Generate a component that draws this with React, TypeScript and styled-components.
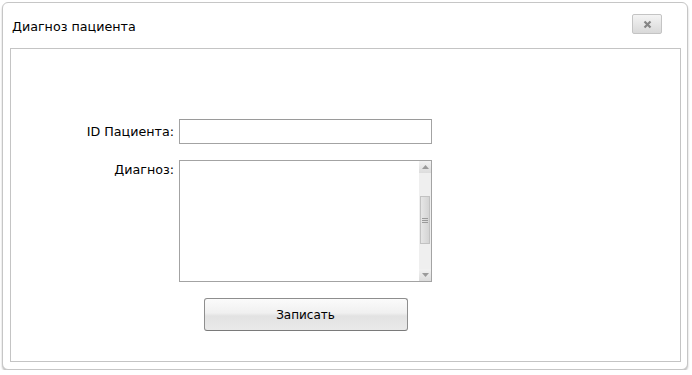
import React from "react";
import styled, { createGlobalStyle } from "styled-components";

const GlobalStyle = createGlobalStyle`
  html, body {
    margin: 0;
    padding: 0;
    background: #ffffff;
  }
  body {
    font-family: "DejaVu Sans", "Liberation Sans", sans-serif;
    font-size: 12.7px;
    color: #000;
  }
`;

const Window = styled.div`
  margin: 2px 0 0 2px;
  width: 686px;
  height: 368px;
  box-sizing: border-box;
  border: 1px solid #c6c6c6;
  border-radius: 6px;
  background: #ffffff;
  box-shadow: 0 2px 2px rgba(0, 0, 0, 0.25);
  display: flex;
  flex-direction: column;
`;

const TitleBar = styled.div`
  height: 45px;
  display: flex;
  align-items: flex-start;
  justify-content: space-between;
  padding: 0 25px 0 9px;
`;

const Title = styled.div`
  margin-top: 16px;
  font-size: 12.7px;
  line-height: 16px;
  color: #000;
`;

const CloseButton = styled.button`
  margin-top: 11px;
  width: 30px;
  height: 20px;
  padding: 0;
  box-sizing: border-box;
  border: 1px solid #c4c4c4;
  border-radius: 2px;
  background: linear-gradient(#f4f4f4, #d9d9d9);
  display: flex;
  align-items: center;
  justify-content: center;
  cursor: pointer;
`;

const Panel = styled.div`
  margin: 0 6px 7px 7px;
  flex: 1;
  border: 1px solid #c4c4c4;
  padding-top: 70px;
`;

const Form = styled.div`
  display: grid;
  grid-template-columns: 163px 253px;
  column-gap: 5px;
  row-gap: 16px;
`;

const Label = styled.label<{ $top?: boolean }>`
  justify-self: end;
  align-self: ${(p) => (p.$top ? "start" : "center")};
  margin-top: ${(p) => (p.$top ? "2px" : "0")};
  font-size: 12.7px;
  line-height: 16px;
  color: #000;
`;

const TextInput = styled.input`
  height: 25px;
  box-sizing: border-box;
  border: 1px solid #a3a3a3;
  border-top-color: #9a9a9a;
  background: #fff;
  padding: 0 4px;
  font-family: inherit;
  font-size: 13px;
  outline: none;
`;

const AreaBox = styled.div`
  height: 122px;
  box-sizing: border-box;
  border: 1px solid #a3a3a3;
  display: flex;
  background: #fff;
`;

const AreaText = styled.textarea`
  flex: 1;
  border: none;
  resize: none;
  outline: none;
  padding: 2px 4px;
  font-family: inherit;
  font-size: 13px;
  overflow: hidden;
`;

const ScrollBar = styled.div`
  width: 12px;
  background: #efefef;
  display: flex;
  flex-direction: column;
  align-items: center;
`;

const ScrollArrow = styled.div`
  width: 12px;
  height: 12px;
  display: flex;
  align-items: center;
  justify-content: center;
  background: linear-gradient(#f2f2f2, #dcdcdc);
`;

const ScrollTrack = styled.div`
  flex: 1;
  width: 100%;
  padding-top: 23px;
  box-sizing: border-box;
  display: flex;
  justify-content: center;
`;

const Thumb = styled.div`
  width: 10px;
  height: 48px;
  box-sizing: border-box;
  border: 1px solid #c2c2c2;
  background: linear-gradient(90deg, #e6e6e6, #d4d4d4);
  display: flex;
  flex-direction: column;
  align-items: center;
  justify-content: center;
  gap: 1px;
`;

const Grip = styled.div`
  width: 6px;
  height: 1px;
  background: #9a9a9a;
`;

const ButtonCell = styled.div`
  grid-column: 2;
  display: flex;
  justify-content: center;
`;

const SubmitButton = styled.button`
  width: 204px;
  height: 33px;
  box-sizing: border-box;
  border: 1px solid #8e8e8e;
  border-bottom-color: #7a7a7a;
  border-radius: 3px;
  background: linear-gradient(#fbfbfb 0%, #f0f0f0 45%, #e2e2e2 55%, #e9e9e9 100%);
  font-family: inherit;
  font-size: 12px;
  color: #000;
  cursor: pointer;
`;

const Triangle = ({ down }: { down?: boolean }) => (
  <svg width="7" height="4" viewBox="0 0 7 4">
    <path d={down ? "M0 0h7L3.5 4z" : "M0 4h7L3.5 0z"} fill="#9a9a9a" />
  </svg>
);

const App = () => {
  return (
    <>
      <GlobalStyle />
      <Window>
        <TitleBar>
          <Title>Диагноз пациента</Title>
          <CloseButton aria-label="close">
            <svg width="9" height="9" viewBox="0 0 9 9">
              <path d="M1.5 1.5l6 6M7.5 1.5l-6 6" stroke="#858585" strokeWidth="2.2" />
            </svg>
          </CloseButton>
        </TitleBar>
        <Panel>
          <Form>
            <Label>ID Пациента:</Label>
            <TextInput />
            <Label $top>Диагноз:</Label>
            <AreaBox>
              <AreaText />
              <ScrollBar>
                <ScrollArrow>
                  <Triangle />
                </ScrollArrow>
                <ScrollTrack>
                  <Thumb>
                    <Grip />
                    <Grip />
                    <Grip />
                  </Thumb>
                </ScrollTrack>
                <ScrollArrow>
                  <Triangle down />
                </ScrollArrow>
              </ScrollBar>
            </AreaBox>
            <ButtonCell>
              <SubmitButton>Записать</SubmitButton>
            </ButtonCell>
          </Form>
        </Panel>
      </Window>
    </>
  );
};

export default App;
